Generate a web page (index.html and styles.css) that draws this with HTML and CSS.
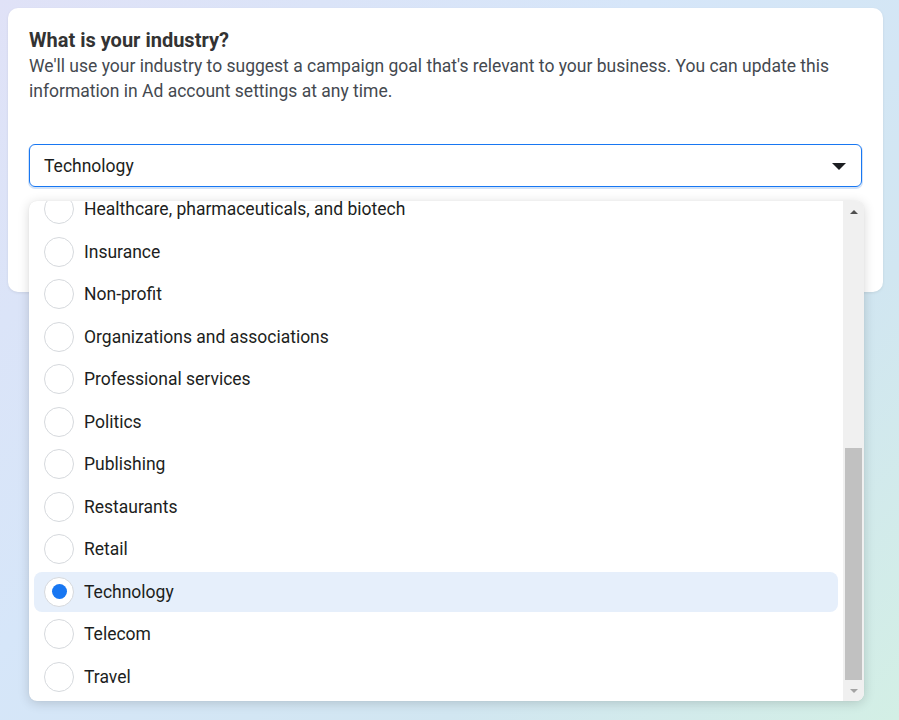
FILE: index.html
```html
<!DOCTYPE html>
<html>
<head>
<meta charset="UTF-8">
<title>What is your industry?</title>
<link rel="stylesheet" href="styles.css">
</head>
<body>
<div class="page">

  <div class="card">
    <h3 class="title">What is your industry?</h3>
    <p class="hint">We'll use your industry to suggest a campaign goal that's relevant to your business. You can update this information in Ad account settings at any time.</p>

    <div class="field">
      <div class="select">
        <span class="value">Technology</span>
        <span class="caret"></span>
      </div>

      <!-- open dropdown, scrolled to the bottom -->
      <div class="menu">
        <div class="options">
          <div class="option"><span class="radio"></span>Healthcare, pharmaceuticals, and biotech</div>
          <div class="option"><span class="radio"></span>Insurance</div>
          <div class="option"><span class="radio"></span>Non-profit</div>
          <div class="option"><span class="radio"></span>Organizations and associations</div>
          <div class="option"><span class="radio"></span>Professional services</div>
          <div class="option"><span class="radio"></span>Politics</div>
          <div class="option"><span class="radio"></span>Publishing</div>
          <div class="option"><span class="radio"></span>Restaurants</div>
          <div class="option"><span class="radio"></span>Retail</div>
          <div class="option selected"><span class="radio"></span>Technology</div>
          <div class="option"><span class="radio"></span>Telecom</div>
          <div class="option"><span class="radio"></span>Travel</div>
        </div>
        <div class="scrollbar">
          <div class="arrow up"></div>
          <div class="track"><div class="thumb"></div></div>
          <div class="arrow down"></div>
        </div>
      </div>
    </div>
  </div>

</div>
</body>
</html>
```

FILE: styles.css
```css
html, body { height: 100%; }

body {
  margin: 0;
  font-family: Roboto, "Liberation Sans", Arial, sans-serif;
  color: #1c1e21;
  background: linear-gradient(135deg, #e0e2f7 0%, #d6e6f9 40%, #d1e6f1 72%, #d3efe5 100%);
  overflow: hidden;
}

.page { padding: 8px; }

.card {
  width: 875px;
  height: 284px;
  box-sizing: border-box;
  padding: 20px 21px;
  background: #fff;
  border-radius: 10px;
  box-shadow: 0 1px 3px rgba(0,0,0,0.08);
}

.title {
  margin: 0 0 2px;
  font-size: 20px;
  line-height: 24px;
  font-weight: 700;
  color: #333;
}

.hint {
  margin: 0;
  font-size: 17.5px;
  line-height: 25px;
  color: #444950;
}

.field {
  position: relative;
  margin-top: 40px;
}

.select {
  display: flex;
  align-items: center;
  justify-content: space-between;
  height: 43px;
  box-sizing: border-box;
  padding: 0 15px 0 14px;
  border: 1px solid #1877f2;
  border-radius: 6px;
  box-shadow: 0 1px 0 1px #d3e3f8;
  font-size: 17.5px;
  color: #1c1e21;
}

.caret {
  width: 0;
  height: 0;
  border-left: 7px solid transparent;
  border-right: 7px solid transparent;
  border-top: 7px solid #1c1e21;
  margin-top: 1px;
}

/* dropdown */
.menu {
  position: absolute;
  left: 0;
  top: 57px;
  width: 835px;
  height: 500px;
  display: flex;
  background: #fff;
  border-radius: 8px;
  box-shadow: 0 2px 12px rgba(0,0,0,0.16), 0 0 1px rgba(0,0,0,0.1);
  overflow: hidden;
}

.options {
  flex: 1;
  display: flex;
  flex-direction: column;
  gap: 2.5px;
  margin-top: -12px;
  padding: 0 5px;
}

.option {
  display: flex;
  align-items: center;
  gap: 10px;
  flex: none;
  height: 40px;
  padding-left: 10px;
  border-radius: 8px;
  font-size: 17.5px;
  color: #1c1e21;
}

.option.selected { background: #e6effb; }

.radio {
  width: 30px;
  height: 30px;
  box-sizing: border-box;
  border: 1px solid #d6d9dd;
  border-radius: 50%;
  background: #fff;
  display: flex;
  align-items: center;
  justify-content: center;
}

.selected .radio::after {
  content: "";
  width: 15px;
  height: 15px;
  border-radius: 50%;
  background: #1877f2;
}

/* fake classic scrollbar */
.scrollbar {
  width: 21px;
  display: flex;
  flex-direction: column;
  background: #f0f0f0;
}

.arrow {
  height: 21px;
  display: flex;
  align-items: center;
  justify-content: center;
}
.arrow::after {
  content: "";
  width: 0;
  height: 0;
  border-left: 4px solid transparent;
  border-right: 4px solid transparent;
}
.arrow.up::after { border-bottom: 4px solid #505050; margin-top: 1px; }
.arrow.down::after { border-top: 4px solid #a3a3a3; }

.track {
  flex: 1;
  display: flex;
  flex-direction: column;
  justify-content: flex-end;
  padding: 0 2px;
}

.thumb {
  height: 232px;
  background: #c1c1c1;
}
```
